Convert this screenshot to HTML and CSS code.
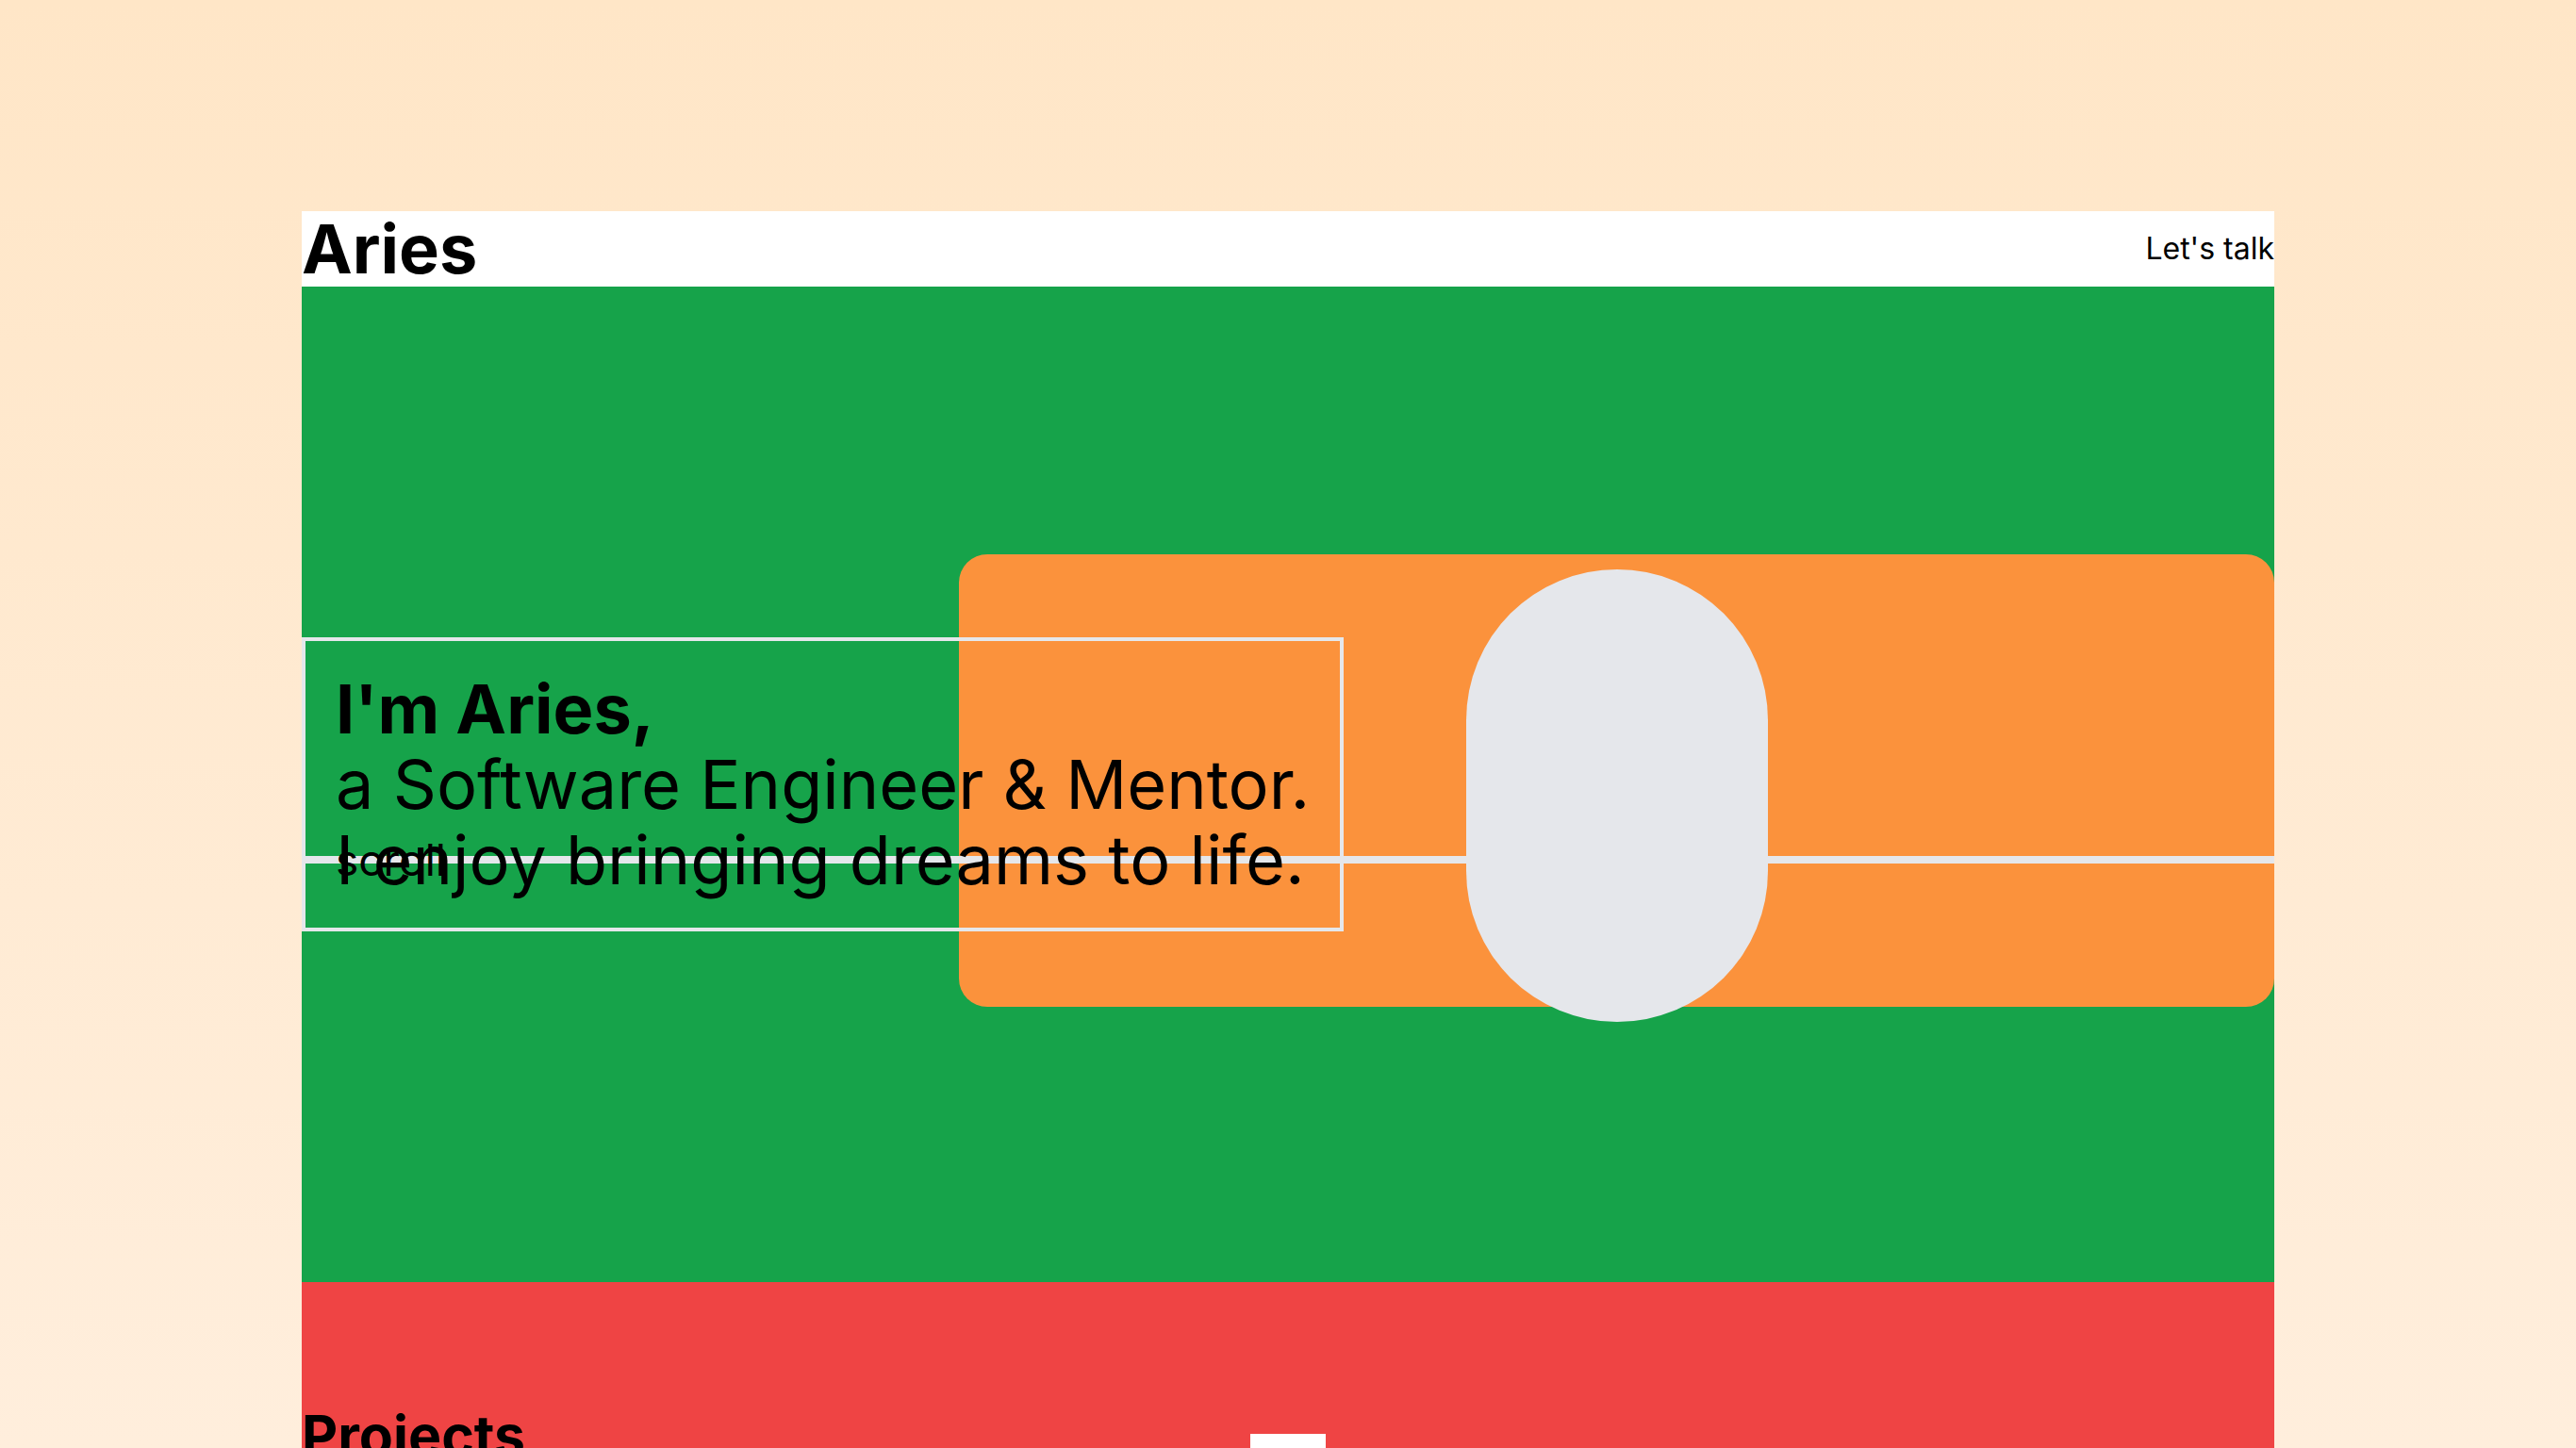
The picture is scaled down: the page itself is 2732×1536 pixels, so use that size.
FILE: index.html
```html
<!DOCTYPE html>
<html lang="en">
<head>
<meta charset="utf-8">
<title>Aries</title>
<link rel="stylesheet" href="styles.css">
</head>
<body>
<div class="page">
  <header class="site-header">
    <a class="brand" href="#">Aries</a>
    <a class="cta" href="#">Let's talk</a>
  </header>
  <section class="hero">
    <div class="hero-grid">
      <div class="intro">
        <h1>
          <span class="intro-name">I'm Aries,</span>
          <span>a Software Engineer &amp; Mentor.</span>
          <span>I enjoy bringing dreams to life.</span>
        </h1>
      </div>
      <div class="portrait-card">
        <div class="portrait"></div>
      </div>
    </div>
    <div class="scroll-line"><span class="scroll-label">scroll</span></div>
  </section>
  <section class="projects">
    <div class="projects-head">
      <h2>Projects</h2>
      <div class="projects-mark"></div>
      <div></div>
    </div>
  </section>
</div>
</body>
</html>
```
FILE: styles.css
```css
html {
  background: #FFEEDC;
}
body {
  margin: 0;
  min-height: 100vh;
  font-family: Inter, "Noto Sans", sans-serif;
  color: #000;
  background: linear-gradient(180deg, #FFE6C7 0px, #FFEEDC 1536px) no-repeat;
}
a {
  color: inherit;
  text-decoration: none;
}
.page {
  padding: 224px 320px 0;
}
.site-header {
  display: flex;
  justify-content: space-between;
  align-items: center;
  height: 80px;
  background: #fff;
}
.brand {
  font-size: 72px;
  font-weight: 700;
  line-height: 80px;
}
.cta {
  font-size: 32px;
  line-height: 36px;
}
.hero {
  position: relative;
  background: #16A34A;
  padding: 284px 0 284px;
}
.hero-grid {
  display: grid;
}
.intro,
.portrait-card {
  grid-area: 1 / 1;
}
.intro {
  justify-self: start;
  align-self: center;
  border: 4px solid #E5E7EB;
  padding: 32px;
  position: relative;
  z-index: 1;
}
.intro h1 {
  margin: 0;
  font-size: 72px;
  line-height: 80px;
  font-weight: 400;
}
.intro h1 span {
  display: block;
  white-space: nowrap;
}
.intro h1 .intro-name {
  font-weight: 700;
}
.portrait-card {
  justify-self: end;
  align-self: center;
  width: 66.6667%;
  height: 480px;
  margin-bottom: 8px;
  background: #FB923C;
  border-radius: 30px;
  display: flex;
  justify-content: center;
}
.portrait {
  flex-shrink: 0;
  width: 320px;
  height: 480px;
  margin-top: 16px;
  border-radius: 9999px;
  background: #E5E7EB;
  position: relative;
  z-index: 1;
}
.scroll-line {
  position: absolute;
  left: 0;
  right: 0;
  top: 604px;
  height: 8px;
  background: #E5E7EB;
  display: flex;
  align-items: center;
  padding-left: 36px;
}
.scroll-label {
  font-size: 46px;
  line-height: 1;
}
.projects {
  background: #EF4444;
  padding-top: 133px;
  min-height: 800px;
}
.projects-head {
  display: grid;
  grid-template-columns: 1fr auto 1fr;
  align-items: start;
}
.projects-head h2 {
  margin: 0;
  font-size: 59px;
  line-height: 60px;
  font-weight: 700;
}
.projects-mark {
  width: 80px;
  height: 80px;
  margin-top: 28px;
  background: #fff;
}
```
